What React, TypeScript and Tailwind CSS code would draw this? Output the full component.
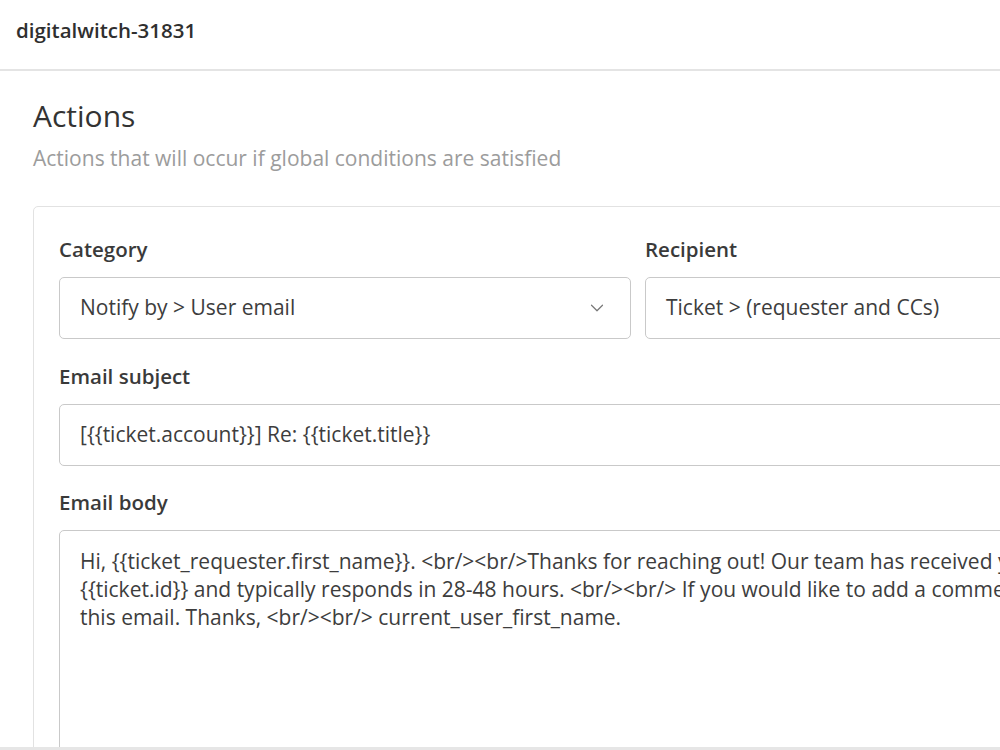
import { ChevronDown } from "lucide-react";

function Field({ label, children }: { label: string; children: React.ReactNode }) {
  return (
    <div className="flex flex-col">
      <label className="text-[20.5px] leading-[26px] font-semibold text-[#3a3a3a]">{label}</label>
      <div className="mt-[15px]">{children}</div>
    </div>
  );
}

function Box({ children, chevron }: { children: React.ReactNode; chevron?: boolean }) {
  return (
    <div className="flex h-[62px] items-center justify-between rounded-[5px] border border-[#c9c9c9] bg-white pl-[20px] pr-[22px] text-[21px] text-[#3d3d3d]">
      <span className="whitespace-nowrap">{children}</span>
      {chevron ? <ChevronDown className="h-[22px] w-[22px] text-[#777]" strokeWidth={1.3} /> : null}
    </div>
  );
}

export default function App() {
  const body = [
    "Hi, {{ticket_requester.first_name}}. <br/><br/>Thanks for reaching out! Our team has received your request",
    "{{ticket.id}} and typically responds in 28-48 hours. <br/><br/> If you would like to add a comment, please reply to",
    "this email. Thanks, <br/><br/> current_user_first_name.",
  ];

  return (
    <div
      className="flex h-[750px] w-[1000px] flex-col overflow-hidden bg-white text-[#3a3a3a]"
      style={{ fontFamily: '"Open Sans", "Noto Sans", sans-serif' }}
    >
      <header className="h-[71px] shrink-0 border-b-2 border-[#e4e4e4] pl-[16px] pt-[16px]">
        <span className="text-[20.5px] leading-[28px] font-semibold text-[#2f2f2f]">digitalwitch-31831</span>
      </header>

      <main className="min-h-0 flex-1 overflow-hidden pl-[33px] pt-[27px]">
        <h1 className="text-[30px] leading-[36px] text-[#333]">Actions</h1>
        <p className="mt-[11px] whitespace-nowrap text-[21px] leading-[26px] text-[#9c9c9c]">
          Actions that will occur if global conditions are satisfied
        </p>

        <section className="mt-[35px] w-[1220px] rounded-[5px] border border-[#e2e2e2] px-[25px] pt-[29px]">
          <div className="grid grid-cols-[572px_572px] gap-x-[14px]">
            <Field label="Category">
              <Box chevron>Notify by &gt; User email</Box>
            </Field>
            <Field label="Recipient">
              <Box>Ticket &gt; (requester and CCs)</Box>
            </Field>
          </div>

          <div className="mt-[24px]">
            <Field label="Email subject">
              <Box>[{"{{"}ticket.account{"}}"}] Re: {"{{"}ticket.title{"}}"}</Box>
            </Field>
          </div>

          <div className="mt-[23px]">
            <Field label="Email body">
              <div className="h-[320px] rounded-[5px] border border-[#c9c9c9] pl-[20px] pt-[16px] text-[21px] leading-[28px] text-[#3d3d3d]">
                {body.map((line) => (
                  <div key={line} className="whitespace-nowrap">
                    {line}
                  </div>
                ))}
              </div>
            </Field>
          </div>
        </section>
      </main>

      <div className="h-[3px] shrink-0 bg-[#e6e6e6]" />
    </div>
  );
}
